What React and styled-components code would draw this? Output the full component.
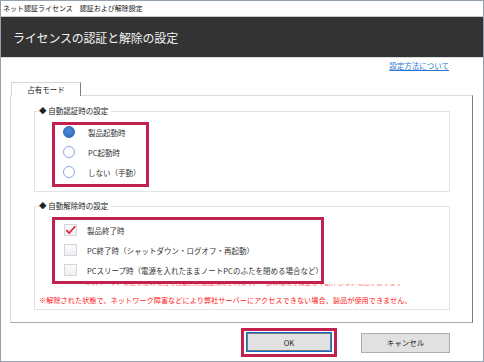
import React from 'react'
import styled, { createGlobalStyle } from 'styled-components';

const Global = createGlobalStyle`
  html, body { margin: 0; padding: 0; background: #fff; }
  body { font-family: "Noto Sans CJK JP", "Noto Sans", sans-serif; }
`;

const Window = styled.div`
  width: 484px;
  height: 362px;
  box-sizing: border-box;
  border: 1px solid #96a1ae;
  background: #fff;
  display: flex;
  flex-direction: column;
  overflow: hidden;
`;

const TitleBar = styled.div`
  height: 15px;
  line-height: 15px;
  padding-left: 2px;
  font-size: 7px;
  color: #111;
  border-bottom: 1px solid #c6c6c6;
`;

const Header = styled.div`
  height: 40px;
  background: #333333;
  border-bottom: 1px solid #dcdcdc;
  display: flex;
  align-items: center;
  padding-left: 12px;
  color: #f2f2f2;
  font-size: 12px;
  letter-spacing: -0.2px;
`;

const Body = styled.div`
  flex: 1;
  display: flex;
  flex-direction: column;
  padding: 0 10px 0 9px;
`;

const LinkRow = styled.div`
  height: 24px;
  display: flex;
  justify-content: flex-end;
  padding-right: 24px;
`;

const HelpLink = styled.a`
  margin-top: 2px;
  font-size: 7.5px;
  line-height: 11px;
  color: #2a76d2;
  text-decoration: underline;
`;

const TabStrip = styled.div`
  display: flex;
  padding-left: 1px;
  position: relative;
  z-index: 1;
  margin-bottom: -1px;
`;

const Tab = styled.div`
  width: 68px;
  height: 13px;
  border: 1px solid #d6d6d6;
  border-right-color: #7d7d7d;
  border-bottom: none;
  background: #fff;
  font-size: 7.5px;
  line-height: 13px;
  text-align: center;
  color: #222;
`;

const Panel = styled.div`
  height: 228px;
  box-sizing: border-box;
  border: 1px solid #dcdcdc;
  border-right-color: #7a7a7a;
  border-bottom-color: #a8a8a8;
  padding: 9px 22px 0 23px;
  display: flex;
  flex-direction: column;
  gap: 8px;
`;

const Group = styled.fieldset`
  margin: 0;
  padding: 0 0 ${({ $pb }) => $pb}px;
  border: 1px solid #e3e3e3;
  min-width: 0;
`;

const Legend = styled.legend`
  margin-left: 4px;
  padding: 0 3px 0 0;
  font-size: 7.5px;
  line-height: 12px;
  color: #222;
`;

const Highlight = styled.div`
  margin: 5px 0 0 17px;
  width: ${({ $w }) => $w}px;
  box-sizing: border-box;
  border: 3px solid #c0214e;
  padding: ${({ $pad }) => $pad};
  display: flex;
  flex-direction: column;
  gap: 6px;
`;

const OptionRow = styled.div`
  height: 14px;
  display: flex;
  align-items: center;
  padding-left: ${({ $pl }) => $pl}px;
  font-size: 7.5px;
  color: #333;
  white-space: nowrap;
`;

const Radio = styled.span`
  width: 12px;
  height: 12px;
  box-sizing: border-box;
  border-radius: 50%;
  border: 1px solid ${({ $on }) => ($on ? '#2f68b4' : '#86a9db')};
  background: ${({ $on }) => ($on ? 'radial-gradient(circle at 45% 40%, #4d8ad6, #2e69b8)' : '#fff')};
  margin-right: 13px;
  flex: none;
`;

const Check = styled.span`
  width: 13px;
  height: 12px;
  box-sizing: border-box;
  border: 1px solid #d3d5da;
  background: linear-gradient(#fbfbfb, #eeeff2);
  margin-right: 10px;
  flex: none;
  display: flex;
  align-items: center;
  justify-content: center;
`;

const Clip = styled.div`
  height: 4px;
  overflow: hidden;
  margin-left: 50px;
  opacity: 0.75;
`;

const ClipText = styled.div`
  margin-top: -7px;
  font-size: 6.5px;
  line-height: 10px;
  color: #ff3030;
  white-space: nowrap;
`;

const Note = styled.div`
  margin: 6px 0 0 4px;
  font-size: 7.2px;
  line-height: 12px;
  color: #ff2020;
  white-space: nowrap;
`;

const ButtonRow = styled.div`
  display: flex;
  align-items: center;
  justify-content: flex-end;
  gap: 24px;
  padding: 5px 23px 0 0;
`;

const Focus = styled.div`
  border: 3px solid #c0214e;
  padding: 1px 2px 2px;
`;

const Button = styled.div`
  width: ${({ $w }) => $w}px;
  height: 20px;
  box-sizing: border-box;
  border: 1px solid ${({ $primary }) => ($primary ? '#0a6fcf' : '#adadad')};
  box-shadow: ${({ $primary }) => ($primary ? 'inset 0 0 0 1px #7a7a7a' : 'none')};
  background: #e1e1e1;
  display: flex;
  align-items: center;
  justify-content: center;
  font-size: 7.5px;
  color: #222;
`;

const auth = ['製品起動時', 'PC起動時', 'しない（手動）'];
const release = [
  '製品終了時',
  'PC終了時（シャットダウン・ログオフ・再起動）',
  'PCスリープ時（電源を入れたままノートPCのふたを閉める場合など）',
];

export default function App() {
  return (
    <>
      <Global />
      <Window>
        <TitleBar>ネット認証ライセンス　認証および解除設定</TitleBar>
        <Header>ライセンスの認証と解除の設定</Header>
        <Body>
          <LinkRow>
            <HelpLink>設定方法について</HelpLink>
          </LinkRow>
          <TabStrip>
            <Tab>占有モード</Tab>
          </TabStrip>
          <Panel>
            <Group $pb={4}>
              <Legend>◆ 自動認証時の設定</Legend>
              <Highlight $w={97} $pad="0 0 5px">
                {auth.map((t, i) => (
                  <OptionRow key={t} $pl={8}>
                    <Radio $on={i === 0} />
                    {t}
                  </OptionRow>
                ))}
              </Highlight>
            </Group>
            <Group $pb={3}>
              <Legend>◆ 自動解除時の設定</Legend>
              <Highlight $w={272} $pad="3px 0 4px">
                {release.map((t, i) => (
                  <OptionRow key={t} $pl={9}>
                    <Check>
                      {i === 0 && (
                        <svg width="13" height="11" viewBox="0 0 13 11">
                          <polyline points="1.5,5 5,8.5 12,0.5" fill="none" stroke="#e0202e" strokeWidth="2" />
                        </svg>
                      )}
                    </Check>
                    {t}
                  </OptionRow>
                ))}
              </Highlight>
              <Clip>
                <ClipText>※スリープ、休止状態の場合も自動的に認証解除されます。一部の環境では正しく動作しない場合があります</ClipText>
              </Clip>
              <Note>※解除された状態で、ネットワーク障害などにより弊社サーバーにアクセスできない場合、製品が使用できません。</Note>
            </Group>
          </Panel>
          <ButtonRow>
            <Focus>
              <Button $w={86} $primary>OK</Button>
            </Focus>
            <Button $w={89}>キャンセル</Button>
          </ButtonRow>
        </Body>
      </Window>
    </>
  )
}
